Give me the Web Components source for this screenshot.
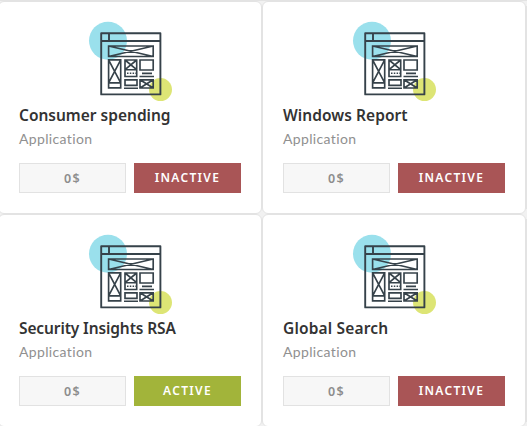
<!DOCTYPE html>
<html lang="en"><head><meta charset="utf-8"><title>Applications</title>
<style>html,body{margin:0;height:426px;overflow:hidden;background:#f1f1f1}</style></head>
<body><app-grid></app-grid>
<template id="card"><style>
:host{display:flex;flex-direction:column;box-sizing:border-box;height:213px;padding:17px 20px 19px;background:#fff;border:1px solid #e3e3e3;border-radius:6px;font-family:"Noto Sans","Open Sans",sans-serif}
app-icon{align-self:center}
h3{margin:0;font-size:15.5px;line-height:24px;font-weight:600;color:#333;white-space:nowrap;letter-spacing:var(--title-spacing,0)}
p{margin:0;font:14px/24px Lato,sans-serif;color:#909090;letter-spacing:.35px}
footer{display:grid;grid-template-columns:107px 107px;gap:8px;margin-top:12px}
</style><app-icon></app-icon><h3><slot></slot></h3><p>Application</p><footer><card-label kind="price">0$</card-label><card-label id="state"></card-label></footer></template>
<template id="label"><style>
:host{display:flex;box-sizing:border-box;height:30px;align-items:center;justify-content:center;font:600 12px/28px "Noto Sans",sans-serif;letter-spacing:1.3px;color:#fff;background:#a95556}
:host([kind=price]){background:#f7f7f7;border:1px solid #e2e2e2;padding-top:2px;color:#8d8d8d;font-size:12.5px}
:host([kind=active]){background:#a2b43a}
</style><slot></slot></template>
<template id="icon"><style>:host{display:block;width:84px;height:84px}svg{display:block}</style>
<svg width="84" height="84" viewBox="88 19 84 84" fill="none" stroke="#36424a" stroke-width="1.65">
<circle cx="108" cy="40.7" r="19" fill="#9ae0ec" stroke="none"/><circle cx="160.5" cy="89.6" r="11.5" fill="#dde575" stroke="none"/>
<path d="M101.2 33.3H160.4V94.4H101.2ZM101.2 41H160.4M109 33.3V41" stroke-width="1.9" stroke-linejoin="round"/>
<path d="M108.6 46H153.2V56.5H108.6ZM108.6 46 153.2 56.5M108.6 56.5 153.2 46"/>
<path d="M108.6 59.8H120.7V87.9H108.6ZM108.6 82.8H120.7M108.6 59.8 120.7 82.8M120.7 59.8 108.6 82.8"/>
<path d="M125 60H136.7V76.5H125ZM125 69.7H136.7M125 60 136.7 69.7M136.7 60 125 69.7"/>
<path d="M127 73.2H136" stroke-dasharray="1.5 1.3"/>
<path d="M140 60H153.2V70H140ZM142 73.3H152M139.5 76.5H154"/>
<path d="M125 79.8H137V85.3H125ZM124 88.2H138"/>
<path d="M140 79.8H153.2V88H140ZM140 79.8 153.2 88M153.2 79.8 140 88"/>
</svg></template>
<script>
function root(el,id){const r=el.attachShadow({mode:'open'});r.append(document.getElementById(id).content.cloneNode(true));return r}
customElements.define('app-icon',class extends HTMLElement{constructor(){super();root(this,'icon')}});
customElements.define('card-label',class extends HTMLElement{constructor(){super();root(this,'label')}});
customElements.define('app-card',class extends HTMLElement{constructor(){super();root(this,'card')}
connectedCallback(){const a=this.hasAttribute('active'),s=this.shadowRoot.getElementById('state');s.setAttribute('kind',a?'active':'inactive');s.textContent=a?'ACTIVE':'INACTIVE'}});
customElements.define('app-grid',class extends HTMLElement{constructor(){super();this.attachShadow({mode:'open'}).innerHTML=`<style>
:host{display:grid;grid-template-columns:264px 264px 1px;grid-auto-rows:213px;margin:1px 0 0 -2px;width:529px;box-shadow:0 -1px #e3e3e3}
app-card:nth-of-type(2){grid-column:2;--title-spacing:.06px}
app-card:nth-of-type(3){grid-column:1;--title-spacing:-.12px}
app-card:nth-of-type(4){--title-spacing:.16px}
i{grid-column:3;box-sizing:border-box;width:1px;border:solid #e3e3e3;border-width:0 0 0 1px;margin:5px 0}i:nth-of-type(1){grid-row:1}i:nth-of-type(2){grid-row:2}</style>
<app-card>Consumer spending</app-card><app-card>Windows Report</app-card><app-card active>Security Insights RSA</app-card><app-card>Global Search</app-card><i></i><i></i>`}});
</script></body></html>
